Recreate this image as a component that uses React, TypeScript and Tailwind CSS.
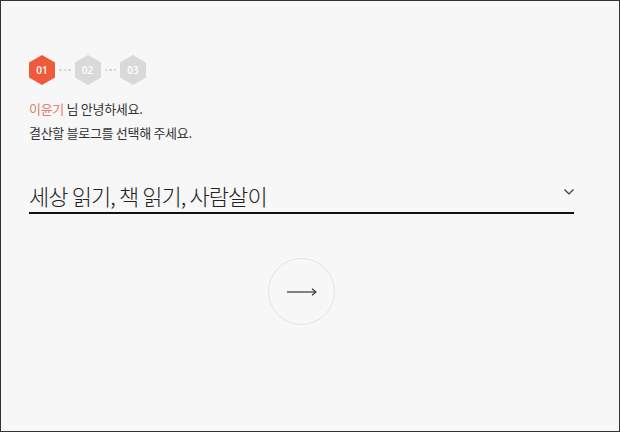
import React from "react";

const KR = { fontFamily: '"Noto Sans CJK KR", "Noto Sans", sans-serif' };

function Hex({ label, active }: { label: string; active?: boolean }) {
  return (
    <div className="relative w-[26px] h-[30px] flex items-center justify-center">
      <svg width="26" height="30" viewBox="0 0 26 30" className="absolute inset-0">
        <polygon
          points="13,0 26,7.5 26,22.5 13,30 0,22.5 0,7.5"
          fill={active ? "#ef5a3a" : "#d9d9d9"}
        />
      </svg>
      <span
        className="relative text-white text-[10px] font-semibold leading-none"
        style={{ fontFamily: '"Open Sans", "Liberation Sans", sans-serif' }}
      >
        {label}
      </span>
    </div>
  );
}

function Dots() {
  return (
    <div className="flex items-center gap-[2px] px-[4px]">
      <span className="w-[2.5px] h-[2.5px] rounded-full bg-[#d2d2d2]" />
      <span className="w-[2.5px] h-[2.5px] rounded-full bg-[#d2d2d2]" />
      <span className="w-[2.5px] h-[2.5px] rounded-full bg-[#d2d2d2]" />
    </div>
  );
}

export default function App() {
  return (
    <div
      className="w-[620px] h-[432px] border border-[#333333] bg-[#f7f7f7] pl-[28px] pt-[54px] overflow-hidden"
      style={KR}
    >
      <div className="w-[545px] flex flex-col">
        <div className="flex items-center">
          <Hex label="01" active />
          <Dots />
          <Hex label="02" />
          <Dots />
          <Hex label="03" />
        </div>

        <div className="mt-[12px] text-[13px] leading-[24px] tracking-[-0.3px] text-[#333333]">
          <p>
            <span className="text-[#e2806f]">이윤기</span> 님 안녕하세요.
          </p>
          <p>결산할 블로그를 선택해 주세요.</p>
        </div>

        <div className="mt-[35px] pb-[2px] flex items-center justify-between border-b-2 border-[#111111]">
          <span className="text-[22px] leading-[30px] tracking-[-0.9px] font-light text-[#222222]">
            세상 읽기, 책 읽기, 사람살이
          </span>
          <svg width="10" height="6" viewBox="0 0 10 6" className="-mt-[6px]">
            <polyline points="0.5,0.5 5,5 9.5,0.5" fill="none" stroke="#333" strokeWidth="1.1" />
          </svg>
        </div>

        <div className="mt-[44px] flex justify-center">
          <div className="w-[67px] h-[67px] rounded-full border border-[#e3e3e3] flex items-center justify-center">
            <svg width="30" height="8" viewBox="0 0 30 8">
              <line x1="0" y1="4" x2="29" y2="4" stroke="#333" strokeWidth="1.2" />
              <polyline points="25,0.8 29,4 25,7.2" fill="none" stroke="#333" strokeWidth="1.1" />
            </svg>
          </div>
        </div>
      </div>
    </div>
  );
}
